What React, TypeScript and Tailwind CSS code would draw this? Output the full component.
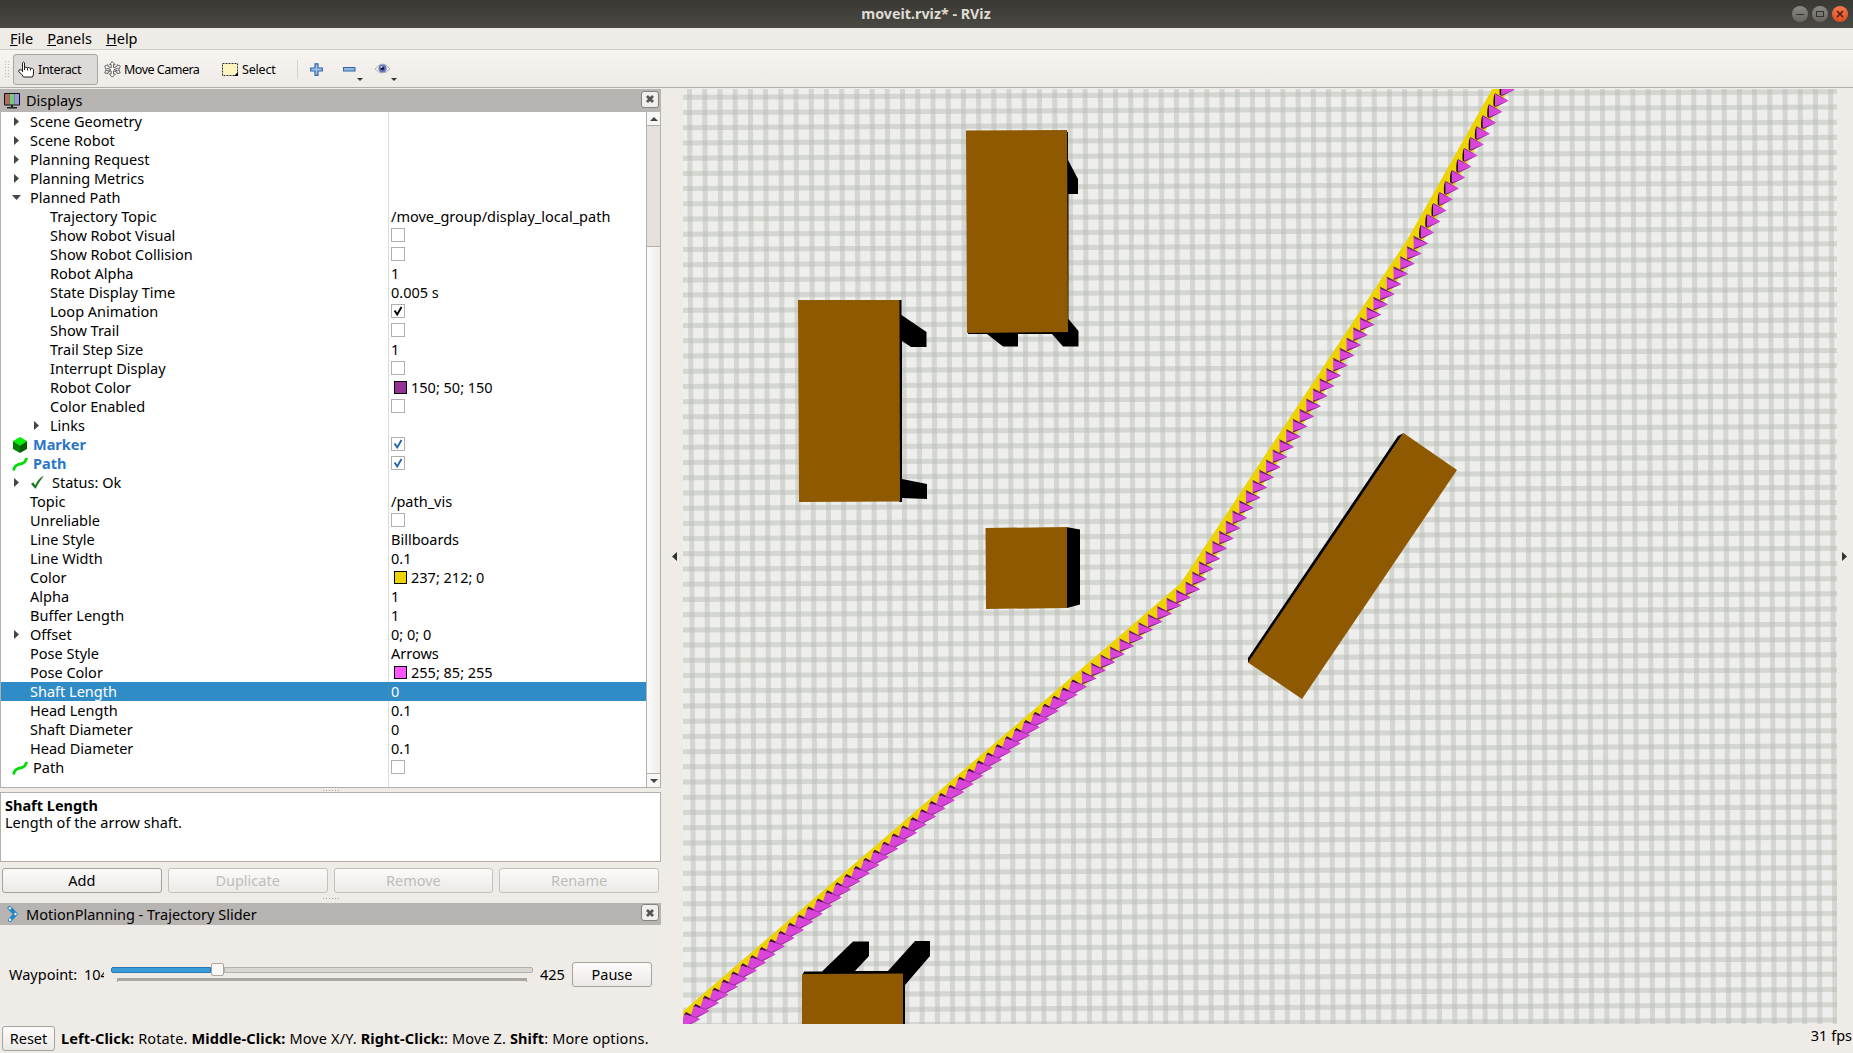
import React from 'react';

type Row = {
  label: string;
  indent: number;
  arrow?: 'right' | 'down';
  value?: string;
  check?: 'off' | 'on' | 'blue';
  swatch?: string;
  icon?: 'cube' | 'path' | 'ok';
  blue?: boolean;
  selected?: boolean;
};

const rows: Row[] = [
  { label: 'Scene Geometry', indent: 30, arrow: 'right' },
  { label: 'Scene Robot', indent: 30, arrow: 'right' },
  { label: 'Planning Request', indent: 30, arrow: 'right' },
  { label: 'Planning Metrics', indent: 30, arrow: 'right' },
  { label: 'Planned Path', indent: 30, arrow: 'down' },
  { label: 'Trajectory Topic', indent: 50, value: '/move_group/display_local_path' },
  { label: 'Show Robot Visual', indent: 50, check: 'off' },
  { label: 'Show Robot Collision', indent: 50, check: 'off' },
  { label: 'Robot Alpha', indent: 50, value: '1' },
  { label: 'State Display Time', indent: 50, value: '0.005 s' },
  { label: 'Loop Animation', indent: 50, check: 'on' },
  { label: 'Show Trail', indent: 50, check: 'off' },
  { label: 'Trail Step Size', indent: 50, value: '1' },
  { label: 'Interrupt Display', indent: 50, check: 'off' },
  { label: 'Robot Color', indent: 50, value: '150; 50; 150', swatch: '#963296' },
  { label: 'Color Enabled', indent: 50, check: 'off' },
  { label: 'Links', indent: 50, arrow: 'right' },
  { label: 'Marker', indent: 9, icon: 'cube', blue: true, check: 'blue' },
  { label: 'Path', indent: 9, icon: 'path', blue: true, check: 'blue' },
  { label: 'Status: Ok', indent: 30, arrow: 'right', icon: 'ok' },
  { label: 'Topic', indent: 30, value: '/path_vis' },
  { label: 'Unreliable', indent: 30, check: 'off' },
  { label: 'Line Style', indent: 30, value: 'Billboards' },
  { label: 'Line Width', indent: 30, value: '0.1' },
  { label: 'Color', indent: 30, value: '237; 212; 0', swatch: '#edd400' },
  { label: 'Alpha', indent: 30, value: '1' },
  { label: 'Buffer Length', indent: 30, value: '1' },
  { label: 'Offset', indent: 30, arrow: 'right', value: '0; 0; 0' },
  { label: 'Pose Style', indent: 30, value: 'Arrows' },
  { label: 'Pose Color', indent: 30, value: '255; 85; 255', swatch: '#ff55ff' },
  { label: 'Shaft Length', indent: 30, value: '0', selected: true },
  { label: 'Head Length', indent: 30, value: '0.1' },
  { label: 'Shaft Diameter', indent: 30, value: '0' },
  { label: 'Head Diameter', indent: 30, value: '0.1' },
  { label: 'Path', indent: 9, icon: 'path', check: 'off' },
];

function RowIcon({ kind }: { kind: 'cube' | 'path' | 'ok' }) {
  if (kind === 'cube')
    return (
      <svg width="16" height="16" viewBox="0 0 16 16" className="shrink-0">
        <path d="M8 0 15 4 8 8.500 1 4Z" fill="#00f000" />
        <path d="M1 4 8 8.500V16L1 12Z" fill="#008200" />
        <path d="M15 4 8 8.500V16L15 12Z" fill="#006000" />
      </svg>
    );
  if (kind === 'path')
    return (
      <svg width="16" height="16" viewBox="0 0 16 16" className="shrink-0">
        <path d="M1.500 14.500C2.500 9.500 5 8.500 7.800 8.100C11.500 7.500 13 6.500 14.800 2" fill="none" stroke="#00dc00" strokeWidth="2.800" />
      </svg>
    );
  return (
    <svg width="16" height="16" viewBox="0 0 16 16" className="shrink-0">
      <path d="M1 9 3.300 7.300 5.200 10.300C7 6 10 2.500 14 .8C10.500 5 8 9 5.800 13.500H5Z" fill="#1e7a22" />
    </svg>
  );
}

function Box({ kind }: { kind: 'off' | 'on' | 'blue' }) {
  return (
    <span className="-mt-px flex size-[14px] items-center justify-center border border-[#b3aeaa] bg-white">
      {kind !== 'off' && (
        <svg width="12" height="12" viewBox="0 0 12 12">
          <path d="M2.600 5.500 5.200 9.500 9.500 2" fill="none" stroke={kind === 'on' ? '#000' : '#2265a8'} strokeWidth="1.900" />
        </svg>
      )}
    </span>
  );
}

function TreeRow({ row }: { row: Row }) {
  return (
    <div className={row.selected ? 'flex h-[19px] bg-[#308cc6] text-white' : 'flex h-[19px]'}>
      <div className="flex w-[387px] shrink-0 items-center">
        <span
          className="flex h-full shrink-0 items-center justify-end"
          style={{ width: row.indent - 1, paddingRight: row.arrow === 'down' ? 9 : 11 }}
        >
          {row.arrow === 'right' && (
            <svg width="5" height="9" viewBox="0 0 5 9"><path d="M0 0 5 4.500 0 9Z" fill="#444" /></svg>
          )}
          {row.arrow === 'down' && (
            <svg width="9" height="5" viewBox="0 0 9 5"><path d="M0 0H9L4.500 5Z" fill="#444" /></svg>
          )}
        </span>
        {row.icon && <RowIcon kind={row.icon} />}
        <span className={`whitespace-pre ${row.icon ? (row.icon === 'ok' ? 'ml-[6px]' : 'ml-[5px]') : ''} ${row.blue ? 'font-bold text-[#2a76c6]' : ''}`}>{row.label}</span>
      </div>
      <div className="flex flex-1 items-center border-l border-[#888]/30 pl-[2px]">
        {row.check && <Box kind={row.check} />}
        {row.swatch && <span className="mr-[4px] ml-[3px] size-[13px] border border-black" style={{ background: row.swatch }} />}
        {row.value && <span>{row.value}</span>}
      </div>
    </div>
  );
}

function CloseBox() {
  return (
    <span className="mr-[2px] mb-[3px] flex h-[17px] w-[18px] items-center justify-center rounded-[3px] border border-[#878380] bg-[#f1efed]">
      <svg width="8" height="8" viewBox="0 0 8 8"><path d="M1 1 7 7M7 1 1 7" stroke="#555" strokeWidth="2.800" /></svg>
    </span>
  );
}

function DisplaysIcon() {
  return (
    <svg width="16" height="16" viewBox="0 0 16 16">
      <rect x="0" y="0" width="16" height="12.500" rx="1" fill="#111" />
      <rect x="1" y="1" width="4.700" height="10.500" fill="#b56a6a" />
      <rect x="5.700" y="1" width="4.700" height="10.500" fill="#7cc77c" />
      <rect x="10.400" y="1" width="4.600" height="10.500" fill="#9a9ae0" />
      <path d="M7 12H9V14H13V15.500H3V14H7Z" fill="#222" />
    </svg>
  );
}

function PlanningIcon() {
  return (
    <svg width="12" height="16" viewBox="0 0 12 16">
      <path d="M2.500 2 8.500 8 3 14" fill="none" stroke="#1f87c7" strokeWidth="4" strokeLinecap="round" />
      <circle cx="2.800" cy="2.200" r="1.200" fill="#fff" />
      <circle cx="8.500" cy="8" r="1.200" fill="#fff" />
      <circle cx="3" cy="13.800" r="1.200" fill="#fff" />
    </svg>
  );
}

function Button({ label, disabled, className }: { label: string; disabled?: boolean; className: string }) {
  return (
    <button
      className={`flex h-[25px] items-center justify-center rounded-[3px] border bg-linear-to-b from-[#fcfbfa] to-[#eceae7] ${
        disabled ? 'border-[#c4c0bc] text-[#bebcba]' : 'border-[#a5a19d] text-black'
      } ${className}`}
    >
      {label}
    </button>
  );
}

function Dots({ className }: { className: string }) {
  return (
    <div className={`flex items-center justify-center gap-[2px] ${className}`}>
      {[0, 1, 2, 3, 4, 5].map((i) => (
        <span key={i} className="size-px bg-[#a5a19d]" />
      ))}
    </div>
  );
}

function ToolIcon({ kind }: { kind: 'hand' | 'move' | 'select' | 'plus' | 'minus' | 'eye' }) {
  if (kind === 'hand')
    return (
      <svg width="17" height="17" viewBox="0 0 17 17" className="shrink-0">
        <path d="M4.500 9.500V1.800Q5.500 .2 6.500 1.800V6.500Q8 5.600 9.300 6.800Q11 6 12.300 7.300Q14.500 6.800 15.500 8.300V13L14.500 16H5.500L3.500 13 .8 10.800Q.5 8.600 2 8.600Z" fill="#fff" stroke="#222" />
        <path d="M4.500 9V11M6.500 6V9M9.500 7V9.500M12.500 7.500V9.500" stroke="#222" />
      </svg>
    );
  if (kind === 'move')
    return (
      <svg width="17" height="17" viewBox="0 0 17 17" className="shrink-0" fill="#fff" stroke="#555" strokeWidth=".9">
        <path d="M8.300 .7 11 3.500H9.500V6.800L13 5.500V3.800L16.300 5 15 8.300 13.800 7.300 10 8.500 13.800 10 15 8.800 16.200 12 13 12.500V11L9.500 9.800V13H11.300L8.300 16.200 5.300 13H7.200V9.800L4 11V12.500L.7 12 2 8.800 3 10 7 8.500 3 7.300 2 8.300 .7 5 4 3.800V5.500L7.200 6.800V3.500H5.600Z" />
      </svg>
    );
  if (kind === 'select')
    return (
      <svg width="17" height="15" viewBox="0 0 17 15" className="shrink-0">
        <rect x=".5" y="1.500" width="15" height="12" fill="#fcf5c0" stroke="#333" strokeDasharray="2 1" />
        <path d="M16 10V14H12Z" fill="#000" />
      </svg>
    );
  if (kind === 'plus')
    return (
      <svg width="13" height="13" viewBox="0 0 13 13">
        <path d="M5 .8H8V5H12.300V8H8V12.300H5V8H.7V5H5Z" fill="#9dc3e8" stroke="#3465a4" strokeWidth="1.200" />
      </svg>
    );
  if (kind === 'minus')
    return (
      <svg width="13" height="5" viewBox="0 0 13 5">
        <rect x=".5" y=".5" width="11.500" height="3.500" fill="#8db8e2" stroke="#3465a4" />
      </svg>
    );
  return (
    <svg width="17" height="12" viewBox="0 0 17 12">
      <path d="M1 6Q8.500 -4 16 6Q8.500 14 1 6Z" fill="#ececec" stroke="#b4b4b4" />
      <circle cx="8.500" cy="5.500" r="4" fill="#6276b8" />
      <circle cx="8.500" cy="5.500" r="1.800" fill="#111b40" />
      <circle cx="7.500" cy="4" r="1" fill="#c7d2f0" />
    </svg>
  );
}

function Caret() {
  return (
    <svg width="6" height="3" viewBox="0 0 6 3"><path d="M0 0H6L3 3Z" fill="#333" /></svg>
  );
}

type Point = { x: number; y: number };

function steps(from: Point, to: Point, n: number): Point[] {
  return Array.from({ length: n }, (_, i) => ({
    x: from.x + ((to.x - from.x) * i) / n,
    y: from.y + ((to.y - from.y) * i) / n,
  }));
}

const tipTop = { x: 1520.9, y: 78.7 };
const tipBend = { x: 1428, y: 243.5 };
const tipKnee = { x: 1200, y: 589.3 };
const tipEnd = { x: 690.5, y: 1027.3 };
const topTips = steps(tipTop, tipBend, 15);
const allLow = steps(tipKnee, tipEnd, 54);
const midTips = [...steps(tipBend, tipKnee, 34), ...allLow.slice(0, 12)];
const lowTips = allLow.slice(12);
const centre = (p: Point) => `${p.x - 14},${p.y - 1}`;

function Viewport() {
  return (
    <svg width="1154" height="935" viewBox="683 89 1154 935" className="block shrink-0 bg-[#eeeeec]">
      <g stroke="#babdb6" strokeOpacity=".5" strokeWidth="5">
        {Array.from({ length: 78 }, (_, i) => {
          const x = 689.5 + (i - 1) * 15.215;
          return <line key={i} x1={x} y1="89" x2={x + 4.5} y2="1024" />;
        })}
        {Array.from({ length: 63 }, (_, i) => {
          const y = 97.3 + i * 15.217;
          return <line key={i} x1="683" y1={y} x2="1837" y2={y - 5.6} />;
        })}
      </g>
      <polyline
        points={[tipTop, tipBend, tipKnee, tipEnd].map(centre).join(' ')}
        fill="none"
        stroke="#edd400"
        strokeWidth="14.500"
      />
      {topTips.map((a, i) => (
        <g key={i} transform={`translate(${a.x} ${a.y})`}>
          <path d="M-13-7.500Q-15.500-6-15 5L-13 6.500Z" fill="#1c061c" />
          <path d="M-13.500-7.500 0 0-13.500 6.500Z" fill="#d944d9" />
          <path d="M-13.500-7.500 0 0-12.500-6ZM-13.500 6.500 0 0-13 5Z" fill="#7d257d" />
        </g>
      ))}
      {midTips.map((a, i) => (
        <g key={i} transform={`translate(${a.x} ${a.y})`}>
          <path d="M-14.500-7.500 .3 0-14.300 6Z" fill="#d944d9" />
          <path d="M-14.500-7.700 .3 0-13.300-5ZM-14.300 6 0 0-14 4.500Z" fill="#6b1f6b" />
        </g>
      ))}
      {lowTips.map((a, i) => (
        <g key={i} transform={`translate(${a.x} ${a.y})`}>
          <path d="M-15.500-5-13.500-7 .3 0-15 8-18.500 4Z" fill="#d944d9" />
          <path d="M-16-4-14-7.200-8.500-4.200-10-3.200-13.500-4.800Z" fill="#43103f" />
          <path d="M-8.500-4.200 0 0-9-3ZM-15 8 0 0-14 6Z" fill="#9b2f9b" />
        </g>
      ))}
      <g fill="#000">
        <path d="M1067 132H1068V160L1078 179V194H1068.500V319L1078.500 331V346.500H1063L1052 334H1018V346.500H1003L987 334H968V332H1067Z" />
        <path d="M899 300H901.500V315L926.500 332V347H911L902 341V479L927 484V499L902 498V502H899Z" />
        <path d="M1066 527 1080 529.500V604.500L1067 608Z" />
        <path d="M1403.500 433 1398 436 1248 658V662.500L1252 660Z" />
        <path d="M803 974 804 971.500H822L853 941.500H869V956L855 971H888L915 941H930V956L905 985V1024H902V974Z" />
      </g>
      <g fill="#8f5902">
        <path d="M966 130.500 1067 130 1068 332 967 333Z" />
        <path d="M798 300H899.500L900 501.500 799 502Z" />
        <path d="M985.500 528 1067 527V608L986 609Z" />
        <path d="M1403.500 433 1457 470 1302 699 1248 662.500Z" />
        <path d="M802 974 903 973.500V1024H802Z" />
      </g>
    </svg>
  );
}

export default function App() {
  return (
    <div className="flex h-[1053px] w-[1853px] flex-col overflow-hidden bg-[#efebe7] font-['Noto_Sans',sans-serif] text-[14.5px] leading-[19px] text-black">
      <header className="flex h-[28px] shrink-0 items-center bg-linear-to-b from-[#393833] to-[#4b4943]">
        <div className="w-[60px]" />
        <div className="mb-px flex-1 text-center text-[14.3px] font-bold text-[#dfdbd2]">moveit.rviz* - RViz</div>
        <div className="flex w-[61px] gap-[4px]">
          <span className="flex size-[16px] items-center justify-center rounded-full bg-linear-to-b from-[#8a8982] to-[#66655f]"><svg width="8" height="8"><path d="M0 4.500H8" stroke="#33322e" /></svg></span>
          <span className="flex size-[16px] items-center justify-center rounded-full bg-linear-to-b from-[#8a8982] to-[#66655f]"><svg width="8" height="8"><rect x=".5" y="1.500" width="7" height="5" fill="none" stroke="#33322e" /></svg></span>
          <span className="flex size-[16px] items-center justify-center rounded-full bg-linear-to-b from-[#f2784f] to-[#df4a16]"><svg width="8" height="8"><path d="M1 1 7 7M7 1 1 7" stroke="#3b1d10" strokeWidth="1.400" /></svg></span>
        </div>
      </header>
      <nav className="flex h-[22px] shrink-0 items-center gap-[14px] border-b border-[#cfccc9] pl-[10px]">
        <span><u>F</u>ile</span>
        <span><u>P</u>anels</span>
        <span><u>H</u>elp</span>
      </nav>
      <div className="flex h-[38px] shrink-0 items-center border-b border-[#b0acaa] bg-linear-to-b from-[#f7f4f1] to-[#efebe7] pt-px text-[12.5px] tracking-[-0.35px] whitespace-nowrap">
        <div className="ml-[5px] grid grid-cols-2 gap-[2px]">
          {Array.from({ length: 12 }, (_, i) => <span key={i} className="size-px bg-[#bbb7b3]" />)}
        </div>
        <div className="ml-[4px] flex h-[31px] w-[85px] items-center gap-[3px] rounded-[3px] border border-[#aaa6a3] bg-[#dddad7] pl-[4px]"><ToolIcon kind="hand" />Interact</div>
        <div className="ml-[6px] flex w-[118px] items-center gap-[3px] tracking-[-0.5px]"><ToolIcon kind="move" />Move Camera</div>
        <div className="flex w-[75px] items-center gap-[3px] tracking-[-0.2px]"><ToolIcon kind="select" />Select</div>
        <div className="h-[19px] w-px bg-[#d5d1ce]" />
        <div className="ml-[12px]"><ToolIcon kind="plus" /></div>
        <div className="ml-[20px]"><ToolIcon kind="minus" /></div>
        <div className="mt-[20px] ml-[1px]"><Caret /></div>
        <div className="ml-[11px]"><ToolIcon kind="eye" /></div>
        <div className="mt-[20px]"><Caret /></div>
      </div>
      <main className="mt-px flex h-[935px] shrink-0">
        <aside className="flex w-[661px] shrink-0 flex-col">
          <div className="flex h-[23px] shrink-0 items-center justify-between bg-[#b8b4b1] pl-[4px]">
            <div className="flex items-center gap-[6px]"><DisplaysIcon /><span>Displays</span></div>
            <CloseBox />
          </div>
          <div className="flex h-[676px] shrink-0 border-b border-l border-[#b3afab] bg-white">
            <div className="flex flex-1 flex-col">
              {rows.map((r, i) => <TreeRow key={i} row={r} />)}
              <div className="ml-[387px] flex-1 border-l border-[#888]/30" />
            </div>
            <div className="flex w-[15px] flex-col border-x border-[#b3afab] bg-[#f8f7f6]">
              <div className="flex h-[14px] items-center justify-center border-b border-[#b3afab]">
                <svg width="8" height="4" viewBox="0 0 8 4"><path d="M4 0 8 4H0Z" fill="#444" /></svg>
              </div>
              <div className="h-[120px] bg-[#e3e0dd]" />
              <div className="flex-1 border-y border-[#b3afab] bg-linear-to-r from-[#fcfbfb] to-[#efedeb]" />
              <div className="flex h-[13px] items-center justify-center">
                <svg width="8" height="4" viewBox="0 0 8 4"><path d="M0 0H8L4 4Z" fill="#444" /></svg>
              </div>
            </div>
          </div>
          <Dots className="h-[4px] shrink-0" />
          <div className="h-[70px] shrink-0 border border-[#b3afab] bg-white px-[4px] pt-[4px] leading-[17px]">
            <div className="font-bold">Shaft Length</div>
            <div>Length of the arrow shaft.</div>
          </div>
          <div className="mt-[6px] flex shrink-0 gap-[6px] px-[2px]">
            <Button label="Add" className="flex-1" />
            <Button label="Duplicate" disabled className="flex-1" />
            <Button label="Remove" disabled className="flex-1" />
            <Button label="Rename" disabled className="flex-1" />
          </div>
          <Dots className="h-[10px] shrink-0 pt-px" />
          <div className="flex h-[22px] shrink-0 items-center justify-between bg-[#b8b4b1] pl-[7px]">
            <div className="flex items-center gap-[7px]"><PlanningIcon /><span>MotionPlanning - Trajectory Slider</span></div>
            <CloseBox />
          </div>
          <div className="flex flex-1 items-center pl-[9px]">
            <span className="w-[75px]">Waypoint:</span>
            <span className="w-[20px] overflow-hidden">104</span>
            <div className="mb-[4px] ml-[7px] w-[422px]">
              <div className="flex h-[13px] items-center">
                <span className="h-[6px] w-[100px] rounded-l-[2px] border border-[#2a77ac] bg-[#3a9ddb]" />
                <span className="h-[13px] w-[13px] shrink-0 rounded-[2px] border border-[#aaa6a2] bg-[#faf9f8]" />
                <span className="h-[6px] flex-1 rounded-r-[2px] border border-[#b3afab] bg-[#d9d6d3]" />
              </div>
              <div className="mx-[6px] mt-[2px] h-[4px] border-x border-[#aaa6a2]"><div className="h-[3px] bg-[#aaa6a2]" /></div>
            </div>
            <span className="ml-[7px] w-[32px]">425</span>
            <Button label="Pause" className="w-[80px]" />
          </div>
        </aside>
        <div className="flex w-[22px] shrink-0 items-center justify-center pl-[4px]">
          <svg width="5" height="9" viewBox="0 0 5 9"><path d="M5 0V9L0 4.500Z" fill="#333" /></svg>
        </div>
        <Viewport />
        <div className="flex flex-1 items-center pl-[5px]">
          <svg width="5" height="9" viewBox="0 0 5 9"><path d="M0 0 5 4.500 0 9Z" fill="#333" /></svg>
        </div>
      </main>
      <footer className="flex flex-1 items-center pl-[2px] whitespace-nowrap">
        <Button label="Reset" className="w-[53px]" />
        <div className="ml-[6px] flex-1 tracking-[0.13px]">
          <b>Left-Click:</b> Rotate. <b>Middle-Click:</b> Move X/Y. <b>Right-Click:</b>: Move Z. <b>Shift</b>: More options.
        </div>
        <div className="mb-[6px] pr-px">31 fps</div>
      </footer>
    </div>
  );
}
